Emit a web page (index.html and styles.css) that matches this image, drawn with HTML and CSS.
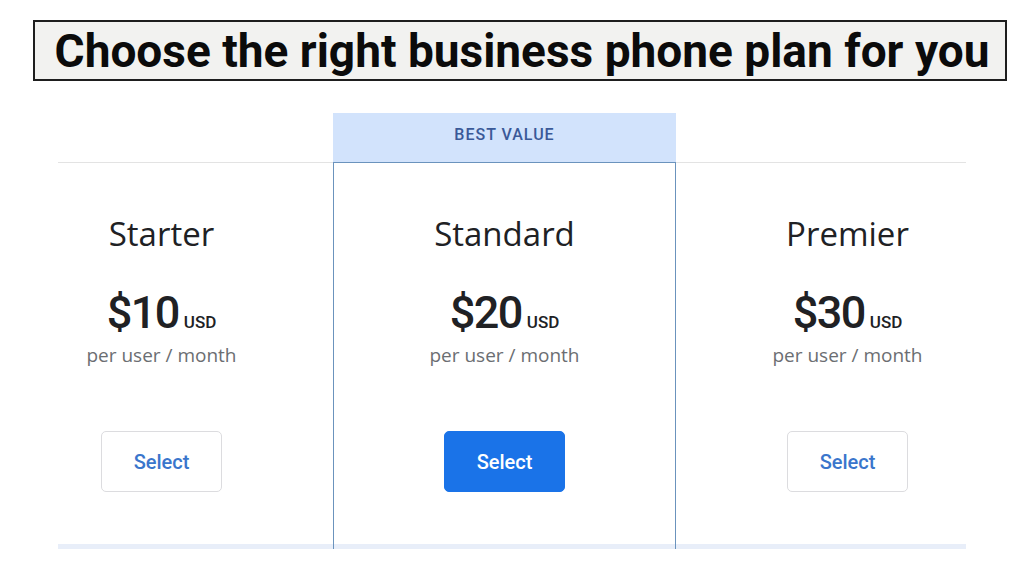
FILE: index.html
```html
<!DOCTYPE html>
<html lang="en">
<head>
<meta charset="utf-8">
<title>Business phone plans</title>
<link rel="stylesheet" href="styles.css">
</head>
<body>
<header class="title-box">
  <h1 class="title">Choose the right business phone plan for you</h1>
</header>
<section class="pricing">
  <div class="pricing-inner">
    <div class="banner-row">
      <div class="banner-spacer"></div>
      <div class="banner">BEST VALUE</div>
      <div class="banner-spacer"></div>
    </div>
    <div class="plans">
      <div class="plan">
        <h2 class="plan-name">Starter</h2>
        <div class="price"><span class="amount">$10</span><span class="currency">USD</span></div>
        <div class="per">per user / month</div>
        <button class="btn">Select</button>
      </div>
      <div class="plan plan-featured">
        <h2 class="plan-name">Standard</h2>
        <div class="price"><span class="amount">$20</span><span class="currency">USD</span></div>
        <div class="per">per user / month</div>
        <button class="btn btn-primary">Select</button>
      </div>
      <div class="plan">
        <h2 class="plan-name">Premier</h2>
        <div class="price"><span class="amount">$30</span><span class="currency">USD</span></div>
        <div class="per">per user / month</div>
        <button class="btn">Select</button>
      </div>
    </div>
  </div>
</section>
</body>
</html>
```
FILE: styles.css
```css
* { box-sizing: border-box; }
html, body { margin: 0; padding: 0; background: #ffffff; }
body {
  width: 1024px;
  height: 576px;
  overflow: hidden;
  font-family: "Open Sans", "DejaVu Sans", sans-serif;
  padding-top: 20px;
}
.title-box {
  margin-left: 33px;
  width: 974px;
  height: 61px;
  border: 2px solid #1e1e1e;
  background: #f2f2f0;
  display: flex;
  align-items: center;
  justify-content: center;
  overflow: hidden;
}
.title {
  margin: 0;
  font-family: "Roboto", sans-serif;
  font-weight: 700;
  font-size: 46px;
  letter-spacing: 0;
  color: #0b0b0b;
  line-height: 1;
  white-space: nowrap;
  padding-left: 4px;
}
.pricing {
  margin-top: 32px;
  margin-left: 58px;
  width: 908px;
  overflow: hidden;
}
.pricing-inner {
  margin-left: -68px;
  width: 1029px;
}
.banner-row {
  display: grid;
  grid-template-columns: 343px 343px 343px;
  height: 49px;
}
.banner {
  background: #d2e3fc;
  color: #3a5998;
  font-family: "Roboto", sans-serif;
  font-weight: 500;
  font-size: 16px;
  letter-spacing: 1px;
  display: flex;
  align-items: center;
  justify-content: center;
  padding-bottom: 6px;
}
.plans {
  display: grid;
  grid-template-columns: 343px 343px 343px;
  border-top: 1px solid #e3e3e3;
  border-bottom: 5px solid #e8eef9;
  height: 387px;
}
.plan {
  display: flex;
  flex-direction: column;
  align-items: center;
  padding-top: 51px;
}
.plan-featured {
  border-left: 1px solid #6b93bd;
  border-right: 1px solid #6b93bd;
  margin-top: -1px;
  margin-bottom: -5px;
  border-top: 1px solid #6b93bd;
  padding-top: 51px;
}
.plan-name {
  margin: 0;
  font-weight: 400;
  font-size: 33px;
  line-height: 40px;
  color: #202124;
}
.price {
  margin-top: 35px;
  display: flex;
  align-items: baseline;
  line-height: 48px;
  color: #202124;
}
.amount {
  font-family: "Roboto", sans-serif;
  font-weight: 500;
  font-size: 45px;
  letter-spacing: -1.5px;
}
.currency {
  font-family: "Roboto", sans-serif;
  font-weight: 500;
  font-size: 17px;
  margin-left: 5px;
}
.per {
  font-size: 19px;
  line-height: 24px;
  color: #6b6e72;
  margin-top: -3px;
}
.btn {
  margin-top: 64px;
  width: 121px;
  height: 61px;
  border: 1px solid #dcdcdf;
  border-radius: 5px;
  background: #ffffff;
  color: #3a76cc;
  font-family: "Roboto", sans-serif;
  font-weight: 500;
  font-size: 20px;
  cursor: pointer;
}
.btn-primary {
  background: #1a73e8;
  border-color: #1a73e8;
  color: #ffffff;
}
```
